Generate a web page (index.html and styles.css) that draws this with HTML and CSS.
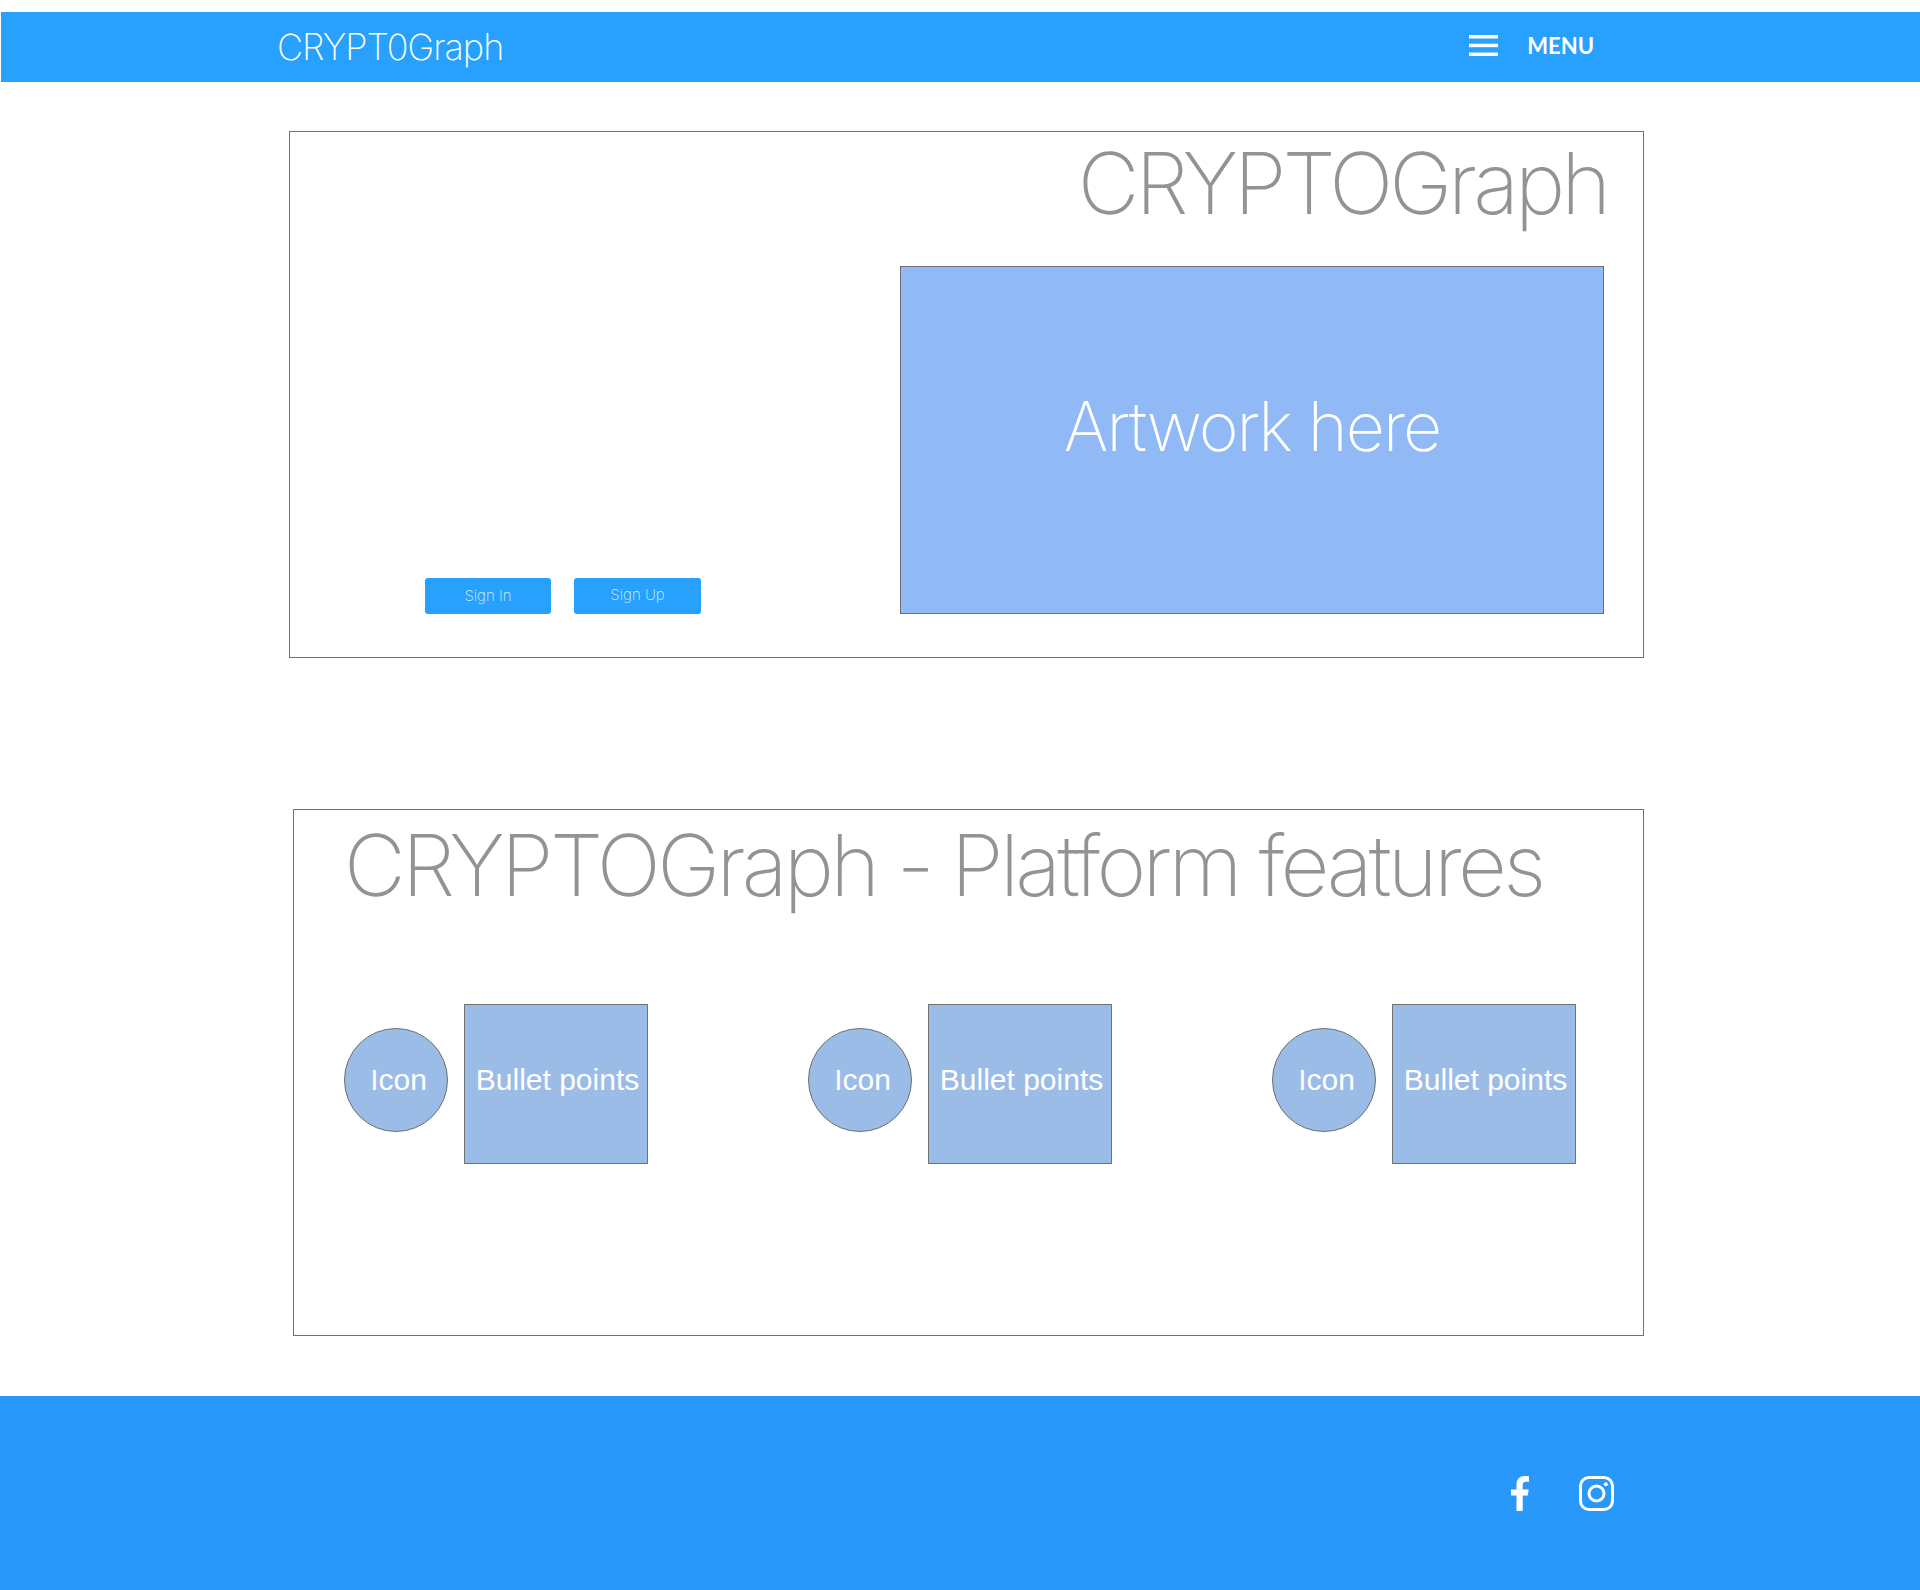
FILE: index.html
```html
<!DOCTYPE html>
<html lang="en">
<head>
    <meta charset="UTF-8">
    <title>CRYPTOGraph</title>
    <link rel="stylesheet" href="styles.css">
</head>
<body>
    <header class="topbar">
        <div class="logo">CRYPT0Graph</div>
        <div class="menu">
            <svg class="menu-icon" width="29" height="21" viewBox="0 0 29 21">
                <rect x="0" y="0" width="29" height="3.5" fill="#fff"/>
                <rect x="0" y="8.7" width="29" height="3.5" fill="#fff"/>
                <rect x="0" y="17.5" width="29" height="3.5" fill="#fff"/>
            </svg>
            <span class="menu-label">MENU</span>
        </div>
    </header>

    <section class="panel panel-hero">
        <h1 class="panel-title hero-title">CRYPTOGraph</h1>
        <div class="hero-row">
            <div class="hero-buttons">
                <button class="btn btn-in">Sign In</button>
                <button class="btn btn-up">Sign Up</button>
            </div>
            <div class="artwork">Artwork here</div>
        </div>
    </section>

    <section class="panel panel-features">
        <h2 class="panel-title features-title">CRYPTOGraph - Platform features</h2>
        <div class="features">
            <div class="feature">
                <div class="feature-icon">Icon</div>
                <div class="feature-box">Bullet points</div>
            </div>
            <div class="feature">
                <div class="feature-icon">Icon</div>
                <div class="feature-box">Bullet points</div>
            </div>
            <div class="feature">
                <div class="feature-icon">Icon</div>
                <div class="feature-box">Bullet points</div>
            </div>
        </div>
    </section>

    <footer class="footer">
        <svg class="social" width="18" height="35" viewBox="0 0 18 35">
            <path d="M5.5 35V19.5H0v-6h5.500V8.600C5.500 3.200 8.800 0 13.600 0c2 0 3.400.1 4.400.3v5.500h-3c-2.500 0-3.300 1.300-3.300 3.300v4.400h6l-.9 6h-5.100V35z" fill="#fff"/>
        </svg>
        <svg class="social" width="35" height="35" viewBox="0 0 35 35">
            <rect x="1.500" y="1.500" width="32" height="32" rx="8.500" fill="none" stroke="#fff" stroke-width="3"/>
            <circle cx="17.500" cy="17.500" r="7.500" fill="none" stroke="#fff" stroke-width="3"/>
            <circle cx="26.800" cy="8.200" r="2" fill="#fff"/>
        </svg>
    </footer>
</body>
</html>
```

FILE: styles.css
```css
body {
    margin: 0;
    padding-top: 12px;
    background-color: #fff;
    font-family: "Liberation Sans", Arial, sans-serif;
}

.topbar {
    display: flex;
    justify-content: space-between;
    align-items: center;
    height: 70px;
    margin-left: 1px;
    padding: 0 326px 0 276px;
    background-color: #27a1fd;
    color: #fff;
}

.logo {
    font-family: Inter, sans-serif;
    font-size: 36px;
    font-weight: 200;
    letter-spacing: -1px;
}

.menu {
    display: flex;
    align-items: center;
    gap: 29px;
    margin-top: -3px;
}

.menu-label {
    font-family: Lato, sans-serif;
    font-size: 22px;
    font-weight: 700;
}

.panel {
    box-sizing: border-box;
    height: 527px;
    margin-right: 276px;
    border: 1px solid #707070;
}

.panel-title {
    margin: 0;
    font-family: Inter, sans-serif;
    font-weight: 200;
    color: #939393;
}

.panel-hero {
    margin-top: 49px;
    margin-left: 289px;
    padding: 0 39px 0 0;
}

.hero-title {
    height: 134px;
    margin-right: -3px;
    font-size: 85px;
    line-height: 104px;
    letter-spacing: -4px;
    text-align: right;
}

.hero-row {
    display: flex;
    justify-content: space-between;
    align-items: flex-end;
}

.hero-buttons {
    display: flex;
    gap: 23px;
    margin-left: 135px;
}

.btn {
    width: 126px;
    height: 36px;
    padding: 0 0 2px;
    border: none;
    border-radius: 3px;
    background-color: #27a1fd;
    color: #d6edff;
    font-family: Inter, sans-serif;
    font-size: 15px;
    font-weight: 200;
}

.btn-up {
    width: 127px;
    padding-bottom: 4px;
}

.artwork {
    box-sizing: border-box;
    display: flex;
    justify-content: center;
    align-items: center;
    width: 704px;
    height: 348px;
    padding-bottom: 28px;
    border: 1px solid #707070;
    background-color: #90b9f6;
    color: #fff;
    font-family: Inter, sans-serif;
    font-size: 68px;
    font-weight: 200;
    letter-spacing: -2px;
}

.panel-features {
    margin-top: 151px;
    margin-left: 293px;
    padding-left: 50px;
}

.features-title {
    height: 194px;
    font-size: 85px;
    line-height: 112px;
    letter-spacing: -3.700px;
    white-space: nowrap;
}

.features {
    display: flex;
    gap: 160px;
}

.feature {
    display: flex;
    align-items: flex-start;
    gap: 16px;
}

.feature-icon,
.feature-box {
    box-sizing: border-box;
    display: flex;
    justify-content: center;
    align-items: center;
    border: 1px solid #707070;
    background-color: #9cbce8;
    color: #fff;
    font-size: 30px;
}

.feature-icon {
    width: 104px;
    height: 104px;
    margin-top: 24px;
    padding-left: 5px;
    border-radius: 50%;
}

.feature-box {
    width: 184px;
    height: 160px;
    padding-left: 3px;
    padding-bottom: 8px;
}

.footer {
    display: flex;
    justify-content: flex-end;
    align-items: center;
    gap: 50px;
    box-sizing: border-box;
    height: 194px;
    margin-top: 60px;
    padding: 0 306px 0 0;
    background-color: #2899fb;
}
```
